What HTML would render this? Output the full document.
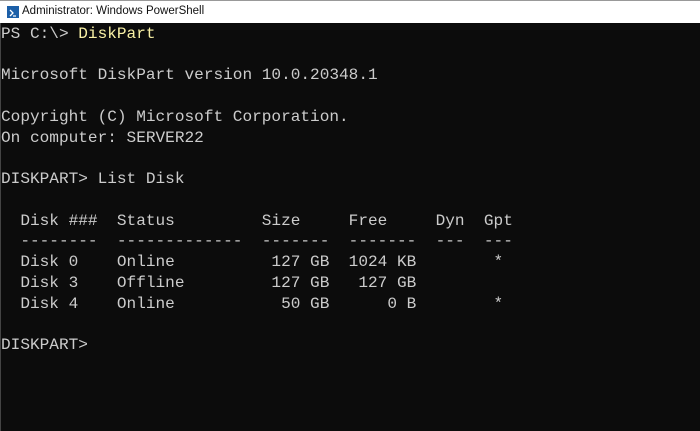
<!DOCTYPE html>
<html><head><meta charset="utf-8"><style>
html,body{margin:0;padding:0;width:700px;height:431px;overflow:hidden;background:#0c0c0c;}
.title{position:absolute;left:0;top:0;width:700px;height:23px;background:#fff;border-top:1px solid #999;box-sizing:border-box;}
.title span{position:absolute;left:22px;top:4px;font:11.5px "Liberation Sans",sans-serif;color:#111;}
.icon{position:absolute;left:7px;top:5px;width:12px;height:12px;background:#1c5fa8;}
.term{position:absolute;left:0;top:23px;width:700px;height:408px;background:#0c0c0c;border-left:1px solid #444;box-sizing:border-box;}
pre{margin:0;position:absolute;left:0px;top:1px;font-family:"Liberation Mono",monospace;font-size:16.1px;line-height:20.73px;color:#cccccc;}
.y{color:#f9f1a5;}
</style></head><body>
<div class="title"><div class="icon"><svg width="12" height="12" viewBox="0 0 12 12"><path d="M3 3 L6 6 L3 9" stroke="#fff" stroke-width="1.3" fill="none"/><path d="M6 9 H9" stroke="#fff" stroke-width="1.2"/></svg></div><span>Administrator: Windows PowerShell</span></div>
<div class="term"><pre>PS C:\&gt; <span class="y">DiskPart</span>

Microsoft DiskPart version 10.0.20348.1

Copyright (C) Microsoft Corporation.
On computer: SERVER22

DISKPART&gt; List Disk

  Disk ###  Status         Size     Free     Dyn  Gpt
  --------  -------------  -------  -------  ---  ---
  Disk 0    Online          127 GB  1024 KB        *
  Disk 3    Offline         127 GB   127 GB
  Disk 4    Online           50 GB      0 B        *

DISKPART&gt; </pre></div>
</body></html>
